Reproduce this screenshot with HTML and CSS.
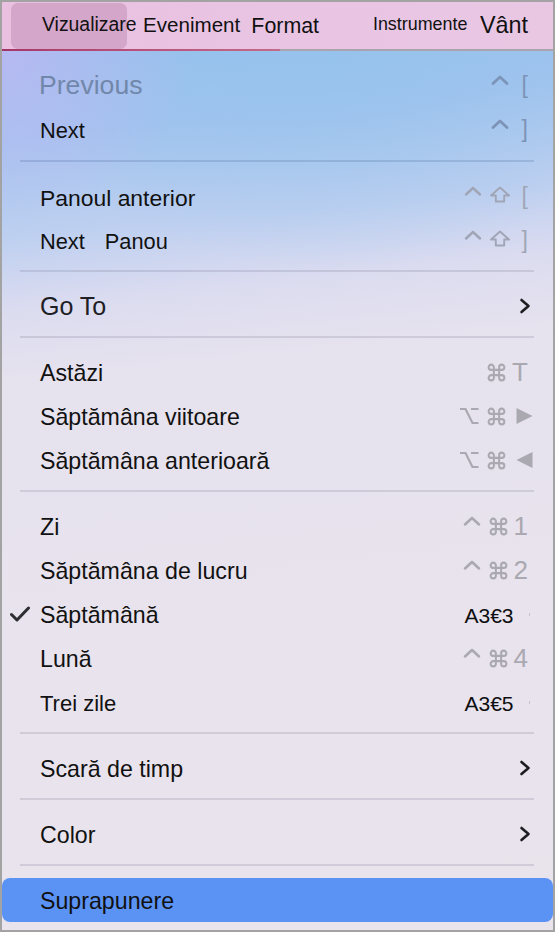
FILE: index.html
```html
<!DOCTYPE html>
<html lang="ro">
<head>
<meta charset="utf-8">
<title>Vizualizare</title>
<link rel="stylesheet" href="styles.css">
</head>
<body>
<div class="frame">
  <div class="menubar">
    <span class="mb mb-viz">Vizualizare</span>
    <span class="mb mb-ev">Eveniment</span>
    <span class="mb mb-fmt">Format</span>
    <span class="mb mb-ins">Instrumente</span>
    <span class="mb mb-vant">Vânt</span>
  </div>
  <div class="menubar-line"></div>
  <div class="menu">
    <div class="row blue">
      <span class="mark"></span>
      <span class="label l-prev">Previous</span>
      <span class="keys">
        <svg class="k-up" viewBox="0 0 18 20"><path d="M2 8.5 L9 2 L16 8.5"/></svg>
        <span class="k-br br-gap">[</span>
      </span>
    </div>
    <div class="row blue">
      <span class="mark"></span>
      <span class="label l-21">Next</span>
      <span class="keys">
        <svg class="k-up" viewBox="0 0 18 20"><path d="M2 8.5 L9 2 L16 8.5"/></svg>
        <span class="k-br br-gap">]</span>
      </span>
    </div>
    <div class="sep sep-first"></div>
    <div class="row grey1">
      <span class="mark"></span>
      <span class="label l-22">Panoul anterior</span>
      <span class="keys">
        <svg class="k-up" viewBox="0 0 18 20"><path d="M2 8.5 L9 2 L16 8.5"/></svg>
        <svg class="k-shift" viewBox="0 0 22 20"><path d="M11 1.5 L20 9.5 H15.2 V15.5 H6.8 V9.5 H2 Z"/></svg>
        <span class="k-br br-gap2">[</span>
      </span>
    </div>
    <div class="row grey1">
      <span class="mark"></span>
      <span class="label l-21"><span>Next</span><span class="word-gap">Panou</span></span>
      <span class="keys">
        <svg class="k-up" viewBox="0 0 18 20"><path d="M2 8.5 L9 2 L16 8.5"/></svg>
        <svg class="k-shift" viewBox="0 0 22 20"><path d="M11 1.5 L20 9.5 H15.2 V15.5 H6.8 V9.5 H2 Z"/></svg>
        <span class="k-br br-gap2">]</span>
      </span>
    </div>
    <div class="sep"></div>
    <div class="row">
      <span class="mark"></span>
      <span class="label l-goto">Go To</span>
      <span class="keys"><svg class="k-chev" viewBox="0 0 12 16"><path d="M2.5 2 L9.5 8 L2.5 14"/></svg></span>
    </div>
    <div class="sep"></div>
    <div class="row grey">
      <span class="mark"></span>
      <span class="label">Astăzi</span>
      <span class="keys">
        <svg class="k-cmd" viewBox="0 0 24 24"><path d="M15 6v12a3 3 0 1 0 3-3H6a3 3 0 1 0 3 3V6a3 3 0 1 0-3 3h12a3 3 0 1 0-3-3"/></svg>
        <span class="k-txt t-gap">T</span>
      </span>
    </div>
    <div class="row grey">
      <span class="mark"></span>
      <span class="label">Săptămâna viitoare</span>
      <span class="keys">
        <svg class="k-opt" viewBox="0 0 20 20"><path d="M1 3 H6.5 L13.5 17 H19.5 M12 3 H19.5"/></svg>
        <svg class="k-cmd" viewBox="0 0 24 24"><path d="M15 6v12a3 3 0 1 0 3-3H6a3 3 0 1 0 3 3V6a3 3 0 1 0-3 3h12a3 3 0 1 0-3-3"/></svg>
        <svg class="k-tri" viewBox="0 0 17 20"><path d="M0.5 2 L16.5 10 L0.5 18 Z"/></svg>
      </span>
    </div>
    <div class="row grey">
      <span class="mark"></span>
      <span class="label">Săptămâna anterioară</span>
      <span class="keys">
        <svg class="k-opt" viewBox="0 0 20 20"><path d="M1 3 H6.5 L13.5 17 H19.5 M12 3 H19.5"/></svg>
        <svg class="k-cmd" viewBox="0 0 24 24"><path d="M15 6v12a3 3 0 1 0 3-3H6a3 3 0 1 0 3 3V6a3 3 0 1 0-3 3h12a3 3 0 1 0-3-3"/></svg>
        <svg class="k-tri" viewBox="0 0 17 20"><path d="M16.5 2 L0.5 10 L16.5 18 Z"/></svg>
      </span>
    </div>
    <div class="sep"></div>
    <div class="row grey">
      <span class="mark"></span>
      <span class="label">Zi</span>
      <span class="keys">
        <svg class="k-up" viewBox="0 0 18 20"><path d="M2 8.5 L9 2 L16 8.5"/></svg>
        <svg class="k-cmd" viewBox="0 0 24 24"><path d="M15 6v12a3 3 0 1 0 3-3H6a3 3 0 1 0 3 3V6a3 3 0 1 0-3 3h12a3 3 0 1 0-3-3"/></svg>
        <span class="k-txt n-gap">1</span>
      </span>
    </div>
    <div class="row grey">
      <span class="mark"></span>
      <span class="label">Săptămâna de lucru</span>
      <span class="keys">
        <svg class="k-up" viewBox="0 0 18 20"><path d="M2 8.5 L9 2 L16 8.5"/></svg>
        <svg class="k-cmd" viewBox="0 0 24 24"><path d="M15 6v12a3 3 0 1 0 3-3H6a3 3 0 1 0 3 3V6a3 3 0 1 0-3 3h12a3 3 0 1 0-3-3"/></svg>
        <span class="k-txt n-gap">2</span>
      </span>
    </div>
    <div class="row grey">
      <span class="mark"><svg class="k-check" viewBox="0 0 20 16"><path d="M1.5 8.5 L7 14 L18.5 2"/></svg></span>
      <span class="label">Săptămână</span>
      <span class="keys">
        <span class="k-code">A3€3</span>
        <span class="k-dot"></span>
      </span>
    </div>
    <div class="row grey">
      <span class="mark"></span>
      <span class="label">Lună</span>
      <span class="keys">
        <svg class="k-up" viewBox="0 0 18 20"><path d="M2 8.5 L9 2 L16 8.5"/></svg>
        <svg class="k-cmd" viewBox="0 0 24 24"><path d="M15 6v12a3 3 0 1 0 3-3H6a3 3 0 1 0 3 3V6a3 3 0 1 0-3 3h12a3 3 0 1 0-3-3"/></svg>
        <span class="k-txt n-gap">4</span>
      </span>
    </div>
    <div class="row grey">
      <span class="mark"></span>
      <span class="label l-trei">Trei zile</span>
      <span class="keys">
        <span class="k-code">A3€5</span>
        <span class="k-dot"></span>
      </span>
    </div>
    <div class="sep"></div>
    <div class="row">
      <span class="mark"></span>
      <span class="label">Scară de timp</span>
      <span class="keys"><svg class="k-chev" viewBox="0 0 12 16"><path d="M2.5 2 L9.5 8 L2.5 14"/></svg></span>
    </div>
    <div class="sep"></div>
    <div class="row">
      <span class="mark"></span>
      <span class="label">Color</span>
      <span class="keys"><svg class="k-chev" viewBox="0 0 12 16"><path d="M2.5 2 L9.5 8 L2.5 14"/></svg></span>
    </div>
    <div class="sep"></div>
    <div class="row sel">
      <span class="mark"></span>
      <span class="label">Suprapunere</span>
      <span class="keys"></span>
    </div>
  </div>
</div>
</body>
</html>
```
FILE: styles.css
```css
* { box-sizing: border-box; margin: 0; padding: 0; }
html, body { width: 555px; height: 932px; overflow: hidden; }
body {
  font-family: "Liberation Sans", Arial, sans-serif;
  color: #111;
  background: #fff;
}
.frame {
  width: 555px;
  height: 932px;
  border: 2px solid #a3a3a3;
  display: flex;
  flex-direction: column;
  overflow: hidden;
  background: #e8e3ed;
}

/* ---------- menu bar ---------- */
.menubar {
  position: relative;
  isolation: isolate;
  flex: none;
  height: 47px;
  display: flex;
  align-items: flex-start;
  padding: 0 25px 0 40px;
  background: linear-gradient(to right, #eac0e1, #e9c5e3 60%, #e9c7e3);
  line-height: 1;
  white-space: nowrap;
}
.menubar::before {
  content: "";
  position: absolute;
  left: 9px;
  top: 1px;
  width: 116px;
  height: 46px;
  border-radius: 7px;
  background: #d4a6c9;
  z-index: -1;
}
.mb { color: #111; }
.mb-viz { font-size: 19.4px; margin-top: 13.4px; }
.mb-ev { font-size: 20.6px; margin-top: 13px; margin-left: 6.5px; }
.mb-fmt { font-size: 21.4px; margin-top: 14.3px; margin-left: 11px; }
.mb-ins { font-size: 17.9px; margin-top: 13.6px; margin-left: auto; }
.mb-vant { font-size: 23.4px; margin-top: 12.4px; margin-left: 12.5px; }

.menubar-line {
  flex: none;
  height: 2px;
  background: linear-gradient(to right, #a23568 0, #b0436e 52px, #c46a8a 278px, #aaa4ae 278px, #a8a3ac 100%);
}

/* ---------- menu body ---------- */
.menu {
  flex: 1;
  padding-top: 12px;
  background:
    radial-gradient(ellipse 190px 170px at 0% 0%, rgba(196, 182, 244, 0.7), rgba(196, 182, 244, 0) 100%),
    radial-gradient(ellipse 320px 220px at 60% 0%, rgba(146, 194, 236, 0.6), rgba(146, 194, 236, 0) 100%),
    linear-gradient(174deg, #96c1ec 0px, #a2c4ee 90px, #bfd0f0 190px, #dcdcf0 260px, #e6e2ee 330px, #e8e3ed 600px, #e9e3ec 100%);
}
.row {
  height: 44px;
  display: grid;
  grid-template-columns: 32px 1fr auto;
  align-items: center;
  padding: 0 25px 0 6px;
  white-space: nowrap;
}
.mark { display: flex; align-items: center; }
.label { font-size: 23.2px; color: #111; line-height: 1; padding-top: 4px; }
.l-prev { font-size: 26.6px; color: #7187aa; margin-left: -1px; padding-top: 0; }
.l-21 { font-size: 21.8px; }
.l-22 { font-size: 22.9px; }
.l-goto { font-size: 25px; color: #202024; padding-top: 0; }
.l-trei { font-size: 22px; }
.word-gap { margin-left: 20px; }

.sep {
  height: 2px;
  margin: 8px 19px 12px 17.5px;
  background: rgba(90, 86, 120, 0.17);
}
.sep-first { margin-top: 9px; margin-bottom: 12px; background: rgba(70, 100, 150, 0.22); }

.sel {
  background: #5b93f5;
  border-radius: 8px;
}

/* ---------- shortcut keys ---------- */
.keys {
  display: flex;
  align-items: center;
  justify-content: flex-end;
  height: 24px;
  color: #aaa8b0;
  --k: #aaa8b0;
}
.blue .keys { --k: #7d93b8; color: #7d93b8; }
.grey1 .keys { --k: #a0a6b6; color: #a0a6b6; }

.keys svg { fill: none; stroke: var(--k); stroke-linecap: round; stroke-linejoin: round; }
.k-up { width: 18px; height: 20px; stroke-width: 2.5; }
.blue .k-up { stroke-width: 2.8; }
.k-shift { width: 22px; height: 20px; stroke-width: 1.9; margin-left: 7px; }
.k-cmd { width: 21px; height: 21px; stroke-width: 2.3; margin-left: 7px; }
.k-opt { width: 20px; height: 20px; stroke-width: 2.2; stroke-linecap: butt !important; stroke-linejoin: miter !important; }
.k-tri { width: 17px; height: 20px; fill: var(--k) !important; stroke: none !important; margin-left: 9px; margin-right: -5px; }
.k-chev { width: 12px; height: 16px; stroke: #1e1e22 !important; stroke-width: 2.6; margin-right: -3px; }
.k-check { width: 20px; height: 16px; margin-left: 2px; fill: none; stroke: #2e2e32; stroke-width: 3; stroke-linecap: round; stroke-linejoin: round; }

.k-br { font-size: 23px; line-height: 1; color: inherit; }
.br-gap { margin-left: 13px; }
.br-gap2 { margin-left: 11px; }
.k-txt { font-size: 26px; line-height: 1; color: inherit; }
.t-gap { margin-left: 5px; }
.n-gap { margin-left: 5px; }
.k-code { font-size: 21px; line-height: 1; color: #0e0e10; padding-top: 3px; }
.k-dot { width: 1.5px; height: 3px; background: #c8c4cc; margin-left: 15px; margin-right: -2px; }
```
